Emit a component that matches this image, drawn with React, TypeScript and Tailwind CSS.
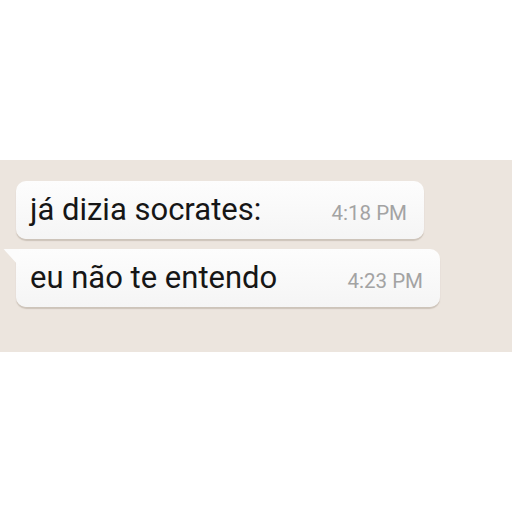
import React from "react";

function Bubble({ text, time, width, tail }: { text: string; time: string; width: string; tail?: boolean }) {
  return (
    <div className="relative">
      {tail && (
        <svg className="absolute left-[-13px] top-0 z-10" width="16" height="18" viewBox="0 0 16 18">
          <path d="M0.5 0 L16 0 L16 17 L2.5 2.2 Q1.2 0.6 0.5 0 Z" fill="#fcfcfc" />
        </svg>
      )}
      <div
        className={`${width} h-[58px] rounded-[10px] bg-gradient-to-b from-[#fdfdfd] to-[#f5f5f5] shadow-[0_2px_1px_rgba(150,135,120,0.35)] flex items-baseline justify-between pl-[14px] pr-[17px] pt-[11px] ${tail ? "rounded-tl-none" : ""}`}
      >
        <span className="text-[31px] leading-[36px] text-[#161616]">{text}</span>
        <span className="text-[20.5px] text-[#a3a3a3]">{time}</span>
      </div>
    </div>
  );
}

export default function App() {
  return (
    <div className="w-[512px] h-[512px] bg-white" style={{ fontFamily: "Roboto, 'Liberation Sans', sans-serif" }}>
      <div className="h-[160px]" />
      <div className="h-[192px] bg-[#ece5de] pt-[21px] pl-[16px] flex flex-col gap-[10px]">
        <Bubble text="já dizia socrates:" time="4:18 PM" width="w-[408px]" />
        <Bubble text="eu não te entendo" time="4:23 PM" width="w-[424px]" tail />
      </div>
    </div>
  );
}
